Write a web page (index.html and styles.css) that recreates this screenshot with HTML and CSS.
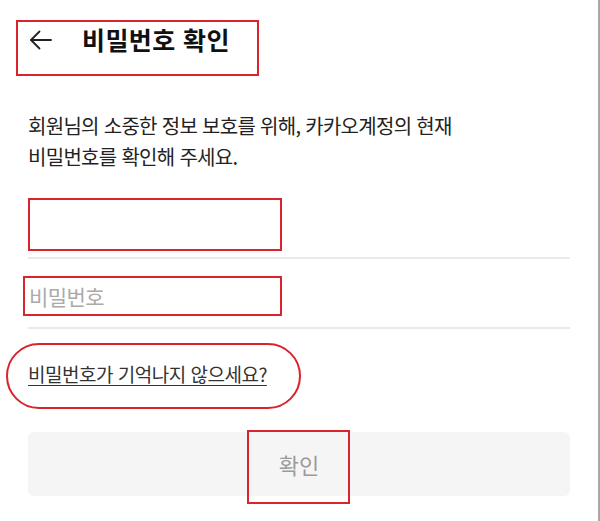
FILE: index.html
```html
<!DOCTYPE html>
<html lang="ko">
<head>
    <meta charset="UTF-8">
    <meta name="viewport" content="width=device-width, initial-scale=1.0">
    <title>비밀번호 확인</title>
    <link rel="stylesheet" href="styles.css">
</head>
<body>
    <div class="screen">
        <header class="top-bar">
            <button class="back" aria-label="뒤로">
                <svg width="24" height="24" viewBox="0 0 24 24" fill="none" stroke="#222" stroke-width="1.8" stroke-linecap="round" stroke-linejoin="round">
                    <path d="M22 12H2"/>
                    <path d="M10.5 3.5L2 12l8.5 8.5"/>
                </svg>
            </button>
            <h1>비밀번호 확인</h1>
        </header>

        <p class="intro">회원님의 소중한 정보 보호를 위해, 카카오계정의 현재<br>비밀번호를 확인해 주세요.</p>

        <form class="form">
            <div class="field">
                <input type="text" class="id-input" value="">
            </div>
            <div class="field">
                <input type="password" placeholder="비밀번호">
            </div>
            <a href="#" class="forgot">비밀번호가 기억나지 않으세요?</a>
            <button type="button" class="submit">확인</button>
        </form>

        <!-- annotation marks drawn over the screenshot -->
        <div class="mark mark-header"></div>
        <div class="mark mark-id"></div>
        <div class="mark mark-pw"></div>
        <div class="mark mark-link"></div>
        <div class="mark mark-btn"></div>
    </div>
</body>
</html>
```

FILE: styles.css
```css
body {
    margin: 0;
    padding: 0;
    font-family: "Noto Sans CJK KR", "Noto Sans", sans-serif;
    color: #222;
    background: #fff;
}

.screen {
    position: relative;
    width: 598px;
    height: 521px;
    border-right: 2px solid #a8a8a8;
    overflow: hidden;
}

.top-bar {
    display: flex;
    align-items: center;
    height: 56px;
    margin-top: 16px;
    padding-left: 29px;
    box-sizing: border-box;
}

.back {
    border: none;
    background: none;
    padding: 0;
    margin-right: 29px;
    display: flex;
    margin-top: -8px;
}

h1 {
    font-size: 25px;
    font-weight: 700;
    color: #111;
    margin: -10px 0 0;
    letter-spacing: 0.4px;
}

.intro {
    margin: 38px 28px 0;
    font-size: 20px;
    letter-spacing: -0.7px;
    line-height: 31px;
    color: #222;
}

.form {
    display: flex;
    flex-direction: column;
    padding: 0 28px;
    margin-top: 24px;
}

.field {
    border-bottom: 2px solid #e9e9e9;
    height: 68px;
    display: flex;
    align-items: flex-end;
}

.field input {
    border: none;
    outline: none;
    width: 100%;
    font-family: inherit;
    font-size: 21px;
    letter-spacing: -0.6px;
    padding: 0 0 16px 1px;
    background: none;
}

.field input::placeholder {
    color: #aaa;
}

.field:first-child {
    height: 61px;
}

.forgot {
    margin-top: 31px;
    align-self: flex-start;
    font-size: 19px;
    letter-spacing: -0.5px;
    color: #333;
    text-decoration: underline;
    text-underline-offset: 3px;
}

.submit {
    margin-top: 45px;
    height: 64px;
    border: none;
    border-radius: 6px;
    background: #f5f5f5;
    color: #9a9a9a;
    font-family: inherit;
    font-size: 22px;
}

.mark {
    position: absolute;
    border: 2px solid #d9232d;
    box-sizing: border-box;
}

.mark-header { left: 16px; top: 20px; width: 243px; height: 56px; }
.mark-id { left: 28px; top: 198px; width: 254px; height: 53px; }
.mark-pw { left: 23px; top: 276px; width: 259px; height: 40px; }
.mark-link { left: 6px; top: 343px; width: 295px; height: 66px; border-radius: 33px; }
.mark-btn { left: 247px; top: 430px; width: 103px; height: 74px; }
```
